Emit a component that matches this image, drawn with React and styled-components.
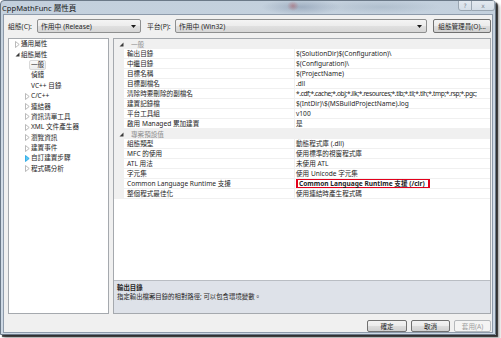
import React from 'react'
import styled, { createGlobalStyle } from 'styled-components'

const GlobalStyle = createGlobalStyle`
  html, body {
    margin: 0;
    padding: 0;
    background: #ffffff;
  }
  body {
    width: 501px;
    height: 338px;
    overflow: hidden;
    font-family: "Noto Sans", "Noto Sans CJK TC", sans-serif;
    color: #1e1e1e;
  }
`

const treeItems = [
  { label: '通用屬性', level: 0, arrow: 'closed' },
  { label: '組態屬性', level: 0, arrow: 'open' },
  { label: '一般', level: 1, selected: true },
  { label: '偵錯', level: 1 },
  { label: 'VC++ 目錄', level: 1 },
  { label: 'C/C++', level: 1, arrow: 'closed' },
  { label: '連結器', level: 1, arrow: 'closed' },
  { label: '資訊清單工具', level: 1, arrow: 'closed' },
  { label: 'XML 文件產生器', level: 1, arrow: 'closed' },
  { label: '瀏覽資訊', level: 1, arrow: 'closed' },
  { label: '建置事件', level: 1, arrow: 'closed' },
  { label: '自訂建置步驟', level: 1, arrow: 'hover' },
  { label: '程式碼分析', level: 1, arrow: 'closed' },
]

const gridRows = [
  { category: '一般' },
  { name: '輸出目錄', value: '$(SolutionDir)$(Configuration)\\' },
  { name: '中繼目錄', value: '$(Configuration)\\' },
  { name: '目標名稱', value: '$(ProjectName)' },
  { name: '目標副檔名', value: '.dll' },
  {
    name: '清除時要刪除的副檔名',
    value: '*.cdf;*.cache;*.obj;*.ilk;*.resources;*.tlb;*.tli;*.tlh;*.tmp;*.rsp;*.pgc;',
    tight: true,
  },
  { name: '建置記錄檔', value: '$(IntDir)\\$(MSBuildProjectName).log' },
  { name: '平台工具組', value: 'v100' },
  { name: '啟用 Managed 累加建置', value: '是' },
  { category: '專案預設值' },
  { name: '組態類型', value: '動態程式庫 (.dll)' },
  { name: 'MFC 的使用', value: '使用標準的視窗程式庫' },
  { name: 'ATL 用法', value: '未使用 ATL' },
  { name: '字元集', value: '使用 Unicode 字元集' },
  { name: 'Common Language Runtime 支援', value: 'Common Language Runtime 支援 (/clr)', marked: true },
  { name: '整個程式最佳化', value: '使用連結時產生程式碼' },
]

const Arrow = ({ kind }) => {
  if (kind === 'open') {
    return (
      <svg width="5" height="5" viewBox="0 0 5 5">
        <path d="M4.5 0.5 L4.5 4.5 L0.5 4.5 Z" fill="#3a3a3a" />
      </svg>
    )
  }
  if (kind === 'hover') {
    return (
      <svg width="5" height="7" viewBox="0 0 5 7">
        <path d="M0.5 0.5 L4.2 3.5 L0.5 6.5 Z" fill="#5cc8f2" stroke="#1ba1e2" strokeWidth="0.8" />
      </svg>
    )
  }
  return (
    <svg width="5" height="7" viewBox="0 0 5 7">
      <path d="M0.5 0.5 L4.2 3.5 L0.5 6.5 Z" fill="none" stroke="#a8a8a8" strokeWidth="0.8" />
    </svg>
  )
}

const ComboArrow = () => (
  <svg width="5" height="3" viewBox="0 0 5 3">
    <path d="M0 0 L5 0 L2.5 3 Z" fill="#1a1a1a" />
  </svg>
)

const App = () => {
  return (
    <>
      <GlobalStyle />
      <Window>
        <TitleBar>
          <Title>CppMathFunc 屬性頁</Title>
          <CaptionButtons>
            <CaptionButton $w={14}>?</CaptionButton>
            <CaptionButton $w={23} $last>x</CaptionButton>
          </CaptionButtons>
        </TitleBar>
        <Client>
          <ConfigRow>
            <Label $w={29}>組態(C):</Label>
            <Combo $w={104}>
              <span>作用中 (Release)</span>
              <ComboArrow />
            </Combo>
            <Label $w={28} $ml={6}>平台(P):</Label>
            <Combo $grow>
              <span>作用中 (Win32)</span>
              <ComboArrow />
            </Combo>
            <PushButton $w={58} $ml={6} $tall>組態管理員(O)...</PushButton>
          </ConfigRow>

          <Main>
            <Tree>
              {treeItems.map((item) => (
                <TreeRow key={item.label} $level={item.level}>
                  <ArrowBox>{item.arrow && <Arrow kind={item.arrow} />}</ArrowBox>
                  <TreeLabel $selected={item.selected}>{item.label}</TreeLabel>
                </TreeRow>
              ))}
            </Tree>

            <RightPane>
              <Grid>
                {gridRows.map((row) =>
                  row.category ? (
                    <CategoryRow key={row.category}>
                      <Gutter $cat>
                        <Arrow kind="open" />
                      </Gutter>
                      <CategoryText>{row.category}</CategoryText>
                    </CategoryRow>
                  ) : (
                    <PropRow key={row.name}>
                      <Gutter />
                      <NameCell>{row.name}</NameCell>
                      <ValueCell $tight={row.tight}>
                        {row.marked ? <Marked>{row.value}</Marked> : row.value}
                      </ValueCell>
                    </PropRow>
                  )
                )}
              </Grid>
              <Description>
                <DescTitle>輸出目錄</DescTitle>
                <DescText>指定輸出檔案目錄的相對路徑; 可以包含環境變數。</DescText>
              </Description>
            </RightPane>
          </Main>

          <Footer>
            <PushButton $w={40}>確定</PushButton>
            <PushButton $w={39}>取消</PushButton>
            <PushButton $w={37} $disabled>套用(A)</PushButton>
          </Footer>
        </Client>
      </Window>
    </>
  )
}

export default App

const Window = styled.div`
  width: 496px;
  box-sizing: border-box;
  display: flex;
  flex-direction: column;
  border: 1px solid #6b7988;
  border-radius: 4px 4px 0 0;
  background:
    radial-gradient(ellipse 40px 8px at 300px 6px, rgba(90, 110, 140, 0.35), transparent),
    radial-gradient(ellipse 6px 5px at 292px 5px, rgba(200, 60, 60, 0.45), transparent),
    radial-gradient(ellipse 60px 7px at 380px 6px, rgba(120, 140, 160, 0.25), transparent),
    linear-gradient(#c3d0dd, #d3dde8 60%, #cdd8e4);
  box-shadow: 2px 2px 1px rgba(0, 0, 0, 0.75), 4px 4px 3px rgba(0, 0, 0, 0.25);
`

const TitleBar = styled.div`
  height: 13px;
  display: flex;
  align-items: center;
  justify-content: space-between;
  padding-left: 1px;
  overflow: hidden;
`

const Title = styled.div`
  font-size: 7.6px;
  line-height: 12px;
  color: #1a1a1a;
  white-space: nowrap;
`

const CaptionButtons = styled.div`
  display: flex;
  align-self: flex-start;
  margin-top: -1px;
`

const CaptionButton = styled.div`
  width: ${(p) => p.$w}px;
  height: 11px;
  box-sizing: border-box;
  border: 1px solid #9aa6b2;
  border-left-width: ${(p) => (p.$last ? 0 : 1)}px;
  border-radius: ${(p) => (p.$last ? '0 0 3px 0' : '0 0 0 3px')};
  background: linear-gradient(rgba(240, 244, 248, 0.7), rgba(220, 228, 236, 0.7));
  font-family: "DejaVu Sans", sans-serif;
  font-size: 6px;
  line-height: 9px;
  text-align: center;
  color: #7a8590;
`

const Client = styled.div`
  margin: 0 2px 1px 2px;
  border: 1px solid #8e9bab;
  background: #f0f0f0;
  padding: 4px 1px 0 4px;
  display: flex;
  flex-direction: column;
`

const ConfigRow = styled.div`
  height: 14px;
  display: flex;
  align-items: center;
`

const Label = styled.div`
  width: ${(p) => p.$w}px;
  flex-shrink: 0;
  margin-left: ${(p) => p.$ml || 0}px;
  font-size: 6.8px;
  white-space: nowrap;
`

const Combo = styled.div`
  ${(p) => (p.$grow ? 'flex: 1;' : `width: ${p.$w}px; flex-shrink: 0;`)}
  height: 14px;
  box-sizing: border-box;
  border: 1px solid #8e8f8f;
  border-radius: 2px;
  background: linear-gradient(#f4f4f4, #ececec 50%, #e0e0e0 50%, #d6d6d6);
  display: flex;
  align-items: center;
  justify-content: space-between;
  padding: 0 4px 0 3px;
  font-size: 6.8px;
  white-space: nowrap;
`

const PushButton = styled.div`
  width: ${(p) => p.$w}px;
  flex-shrink: 0;
  margin-left: ${(p) => p.$ml || 0}px;
  height: ${(p) => (p.$tall ? 14 : 12)}px;
  box-sizing: border-box;
  border: 1px solid ${(p) => (p.$disabled ? '#b5b8bb' : '#707070')};
  border-radius: 2px;
  background: ${(p) =>
    p.$disabled ? '#f4f4f4' : 'linear-gradient(#f3f3f3, #ebebeb 50%, #dddddd 50%, #d0d0d0)'};
  color: ${(p) => (p.$disabled ? '#a0a0a0' : '#1e1e1e')};
  font-size: 6.6px;
  display: flex;
  align-items: center;
  justify-content: center;
  white-space: nowrap;
`

const Main = styled.div`
  margin-top: 5px;
  height: 276px;
  display: flex;
  gap: 4px;
`

const Tree = styled.div`
  width: 101px;
  flex-shrink: 0;
  box-sizing: border-box;
  border: 1px solid #a5a9ae;
  background: #ffffff;
  overflow: hidden;
`

const TreeRow = styled.div`
  height: 10.4px;
  display: flex;
  align-items: center;
  padding-left: ${(p) => (p.$level ? 16 : 6)}px;
  font-size: 6.6px;
  white-space: nowrap;
`

const ArrowBox = styled.div`
  width: 6px;
  flex-shrink: 0;
  display: flex;
  align-items: center;
`

const TreeLabel = styled.span`
  line-height: 8px;
  ${(p) =>
    p.$selected &&
    `
    margin-left: -2px;
    padding: 0 1px;
    border: 1px solid #d9d9d9;
    border-radius: 2px;
    background: linear-gradient(#fafafa, #ececec);
  `}
`

const RightPane = styled.div`
  flex: 1;
  min-width: 0;
  box-sizing: border-box;
  border: 1px solid #a5a9ae;
  display: flex;
  flex-direction: column;
`

const Grid = styled.div`
  flex: 1;
  background: #ffffff;
  border-bottom: 1px solid #b9bdc3;
  overflow: hidden;
`

const CategoryRow = styled.div`
  height: 10px;
  display: flex;
  align-items: center;
  background: #f0f0f0;
  font-size: 6.6px;
`

const Gutter = styled.div`
  width: 10px;
  height: 100%;
  flex-shrink: 0;
  background: #f0f0f0;
  display: flex;
  align-items: center;
  padding-left: ${(p) => (p.$cat ? 5 : 0)}px;
  box-sizing: border-box;
`

const CategoryText = styled.div`
  padding-left: 7px;
  color: #8f8f8f;
`

const PropRow = styled.div`
  height: 10px;
  box-sizing: border-box;
  display: flex;
  border-bottom: 1px solid #f0f0f0;
  font-size: 6.6px;
  line-height: 9px;
  white-space: nowrap;
`

const NameCell = styled.div`
  width: 171px;
  flex-shrink: 0;
  box-sizing: border-box;
  padding-left: 3px;
  border-right: 1px solid #f0f0f0;
  overflow: hidden;
`

const ValueCell = styled.div`
  flex: 1;
  min-width: 0;
  padding-left: 1px;
  overflow: hidden;
  letter-spacing: ${(p) => (p.$tight ? '-0.38px' : 'normal')};
`

const Marked = styled.span`
  display: inline-block;
  height: 11px;
  box-sizing: border-box;
  margin-top: -1px;
  padding: 0 3px 0 1px;
  border: 2px solid #e3001b;
  font-weight: bold;
  line-height: 7px;
`

const Description = styled.div`
  height: 32px;
  box-sizing: border-box;
  padding: 2px 3px;
  background: #dee2e9;
  font-size: 6.4px;
  line-height: 9px;
`

const DescTitle = styled.div`
  font-weight: bold;
`

const DescText = styled.div`
  white-space: nowrap;
`

const Footer = styled.div`
  margin-top: 6px;
  display: flex;
  justify-content: flex-end;
  gap: 4px;
`
